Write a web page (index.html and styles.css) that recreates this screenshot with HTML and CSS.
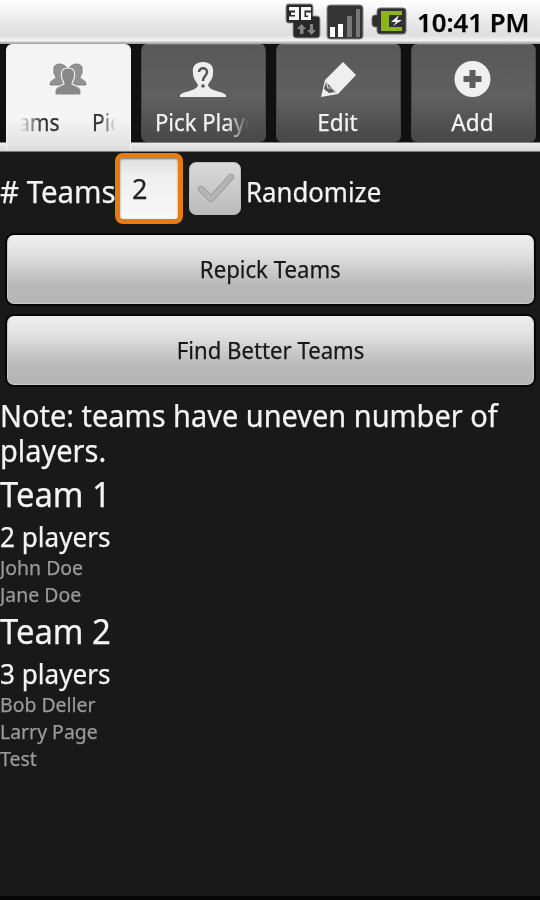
FILE: index.html
```
<!DOCTYPE html>
<html lang="en">
<head>
<meta charset="utf-8">
<title>Team Picker</title>
<link rel="stylesheet" href="styles.css">
</head>
<body>
<header class="status">
  <svg class="i3g" width="38" height="38" viewBox="0 0 38 38">
    <path d="M3 1H26Q28 1 28 4V13H32Q35 13 35 16V32Q35 35 32 35H11Q8 35 8 32V20H3Q1 20 1 17V4Q1 1 3 1Z" fill="#292929" stroke="#999" stroke-width="1"/>
    <path d="M4 4H14V17H4V13.500H10V12H6V9.500H10V7.500H4ZM26 4H16V17H26V9.500H21V12.500H23V14H19.500V7.500H26Z" fill="#f4f4f4"/>
    <path d="M16.500 21L21 26H18.500V31H15V26H12ZM25 21H28V27H31L26.500 32L22 27H25Z" fill="#858585"/>
  </svg>
  <svg class="isig" width="38" height="36" viewBox="0 0 38 36">
    <rect x="1" y="1" width="36" height="34" rx="3" fill="#343434" stroke="#8a8a8a"/>
    <path d="M4 23H9V33H4ZM12 20H17V33H12Z" fill="#fff"/>
    <path d="M21 12H26V33H21ZM30 5H34V33H30Z" fill="#777"/>
  </svg>
  <svg class="ibat" width="36" height="28" viewBox="0 0 36 28">
    <path d="M9 1H32Q35 1 35 4V24Q35 27 32 27H9Q6 27 6 24V20H4Q1 20 1 17V11Q1 8 4 8H6V4Q6 1 9 1Z" fill="#303030" stroke="#777"/>
    <path d="M10 4H31V8H18V20H31V24H10Z" fill="#8cb516"/>
    <path d="M28 8L20 15H25L22 19L31 13H26Z" fill="#f2f2f2"/>
  </svg>
  <span class="clock"><span class="t">10:41 PM</span></span>
</header>
<nav class="tabs">
  <div class="tab active">
    <svg class="icon" width="38" height="34" viewBox="0 0 38 34">
      <g fill="#929292" stroke="#777" stroke-width=".8">
        <path d="M10 1C6 1 4 4 5 8C4 11 7 12 7 15C5 17 1 17 1 22H18V5C16 2 13 1 10 1Z"/>
        <path d="M28 1C32 1 34 4 33 8C34 11 31 12 31 15C33 17 37 17 37 22H20V5C22 2 25 1 28 1Z"/>
      </g>
      <path d="M19 5C13 5 12 9 12.500 13C12 16 15 18 15 21C12 23 6 23 6 28V32H32V28C32 23 26 23 23 21C23 18 26 16 25.500 13C26 9 25 5 19 5Z" fill="#888" stroke="#f1f1f1" stroke-width="1.200"/>
    </svg>
    <div class="label marquee"><span class="t">ams</span><span class="t next">Pic</span></div>
  </div>
  <div class="tab">
    <svg class="icon" width="48" height="36" viewBox="0 0 48 36">
      <path d="M24 0C16 0 13 5 14 11C14 17 17 19 19 23C18 29 5 29 1 33V35H47V33C43 29 30 29 29 23C31 19 34 17 34 11C35 5 32 0 24 0Z" fill="#eee"/>
      <path d="M20 10C20 5 28 5 28 10C28 14 24 14 24 19" fill="none" stroke="#555" stroke-width="2.500"/>
      <circle cx="24" cy="24" r="1.800" fill="#555"/>
    </svg>
    <div class="label faded"><span class="t">Pick Playe</span></div>
  </div>
  <div class="tab">
    <svg class="icon" width="38" height="38" viewBox="0 0 38 38">
      <path d="M24 1L37 14L19 33L2 36L6 19Z" fill="#efefef"/>
      <path d="M7 21L17 31L10 32L5 28Z" fill="#5c5c5c"/>
      <path d="M7 20L9 27L13 27L17 32" fill="none" stroke="#d8d8d8" stroke-width="1.200"/>
    </svg>
    <div class="label"><span class="t">Edit</span></div>
  </div>
  <div class="tab">
    <svg class="icon" width="38" height="38" viewBox="0 0 38 38">
      <circle cx="18.500" cy="18" r="18" fill="#efefef"/>
      <path d="M15.500 9H21.500V15H27.500V21H21.500V27H15.500V21H9.500V15H15.500Z" fill="#5d5d5d"/>
    </svg>
    <div class="label"><span class="t">Add</span></div>
  </div>
</nav>
<main>
  <div class="controls">
    <span class="count"><span class="t"># Teams</span></span>
    <div class="field"><span class="t">2</span></div>
    <div class="check">
      <svg width="38" height="34" viewBox="0 0 38 34"><path d="M4 17L14 27L34 5" fill="none" stroke="#a0a0a0" stroke-width="6.500" stroke-linecap="round" stroke-linejoin="round"/><path d="M4 17L14 27L34 5" fill="none" stroke="#b5b5b5" stroke-width="4.500" stroke-linecap="round" stroke-linejoin="round"/></svg>
    </div>
    <span class="random"><span class="t">Randomize</span></span>
  </div>
  <div class="button"><span class="t">Repick Teams</span></div>
  <div class="button"><span class="t">Find Better Teams</span></div>
  <div class="note"><div><span class="t">Note: teams have uneven number of</span></div><div><span class="t">players.</span></div></div>
  <section>
    <h2><span class="t">Team 1</span></h2>
    <h3><span class="t">2 players</span></h3>
    <p><span class="t">John Doe</span></p>
    <p><span class="t">Jane Doe</span></p>
  </section>
  <section>
    <h2><span class="t">Team 2</span></h2>
    <h3><span class="t">3 players</span></h3>
    <p><span class="t">Bob Deller</span></p>
    <p><span class="t">Larry Page</span></p>
    <p><span class="t">Test</span></p>
  </section>
</main>
</body>
</html>
```
FILE: styles.css
```
* { box-sizing: border-box; margin: 0; padding: 0; }
body {
  width: 540px; height: 900px; overflow: hidden;
  background: #191919; border-bottom: 4px solid #050505;
  font-family: "Noto Sans", "Open Sans", sans-serif; color: #f3f3f3;
}
svg { display: block; flex: none; }
.t { display: inline-block; white-space: nowrap; transform: scaleX(.965); transform-origin: left center; -webkit-text-stroke: .25px currentColor; }
.status {
  height: 44px; display: flex; padding-left: 285px; color: #050505;
  background: linear-gradient(#fff, #efefef 35%, #dedede 80%, #f2f2f2 92%, #999 100%);
}
.i3g { margin-top: 3px; }
.isig { margin: 4px 0 0 3px; }
.ibat { margin: 7px 0 0 7px; }
.clock { margin-left: 10px; font-size: 25px; font-weight: 600; line-height: 45px; }
.clock .t { transform: scaleX(1.03); }
.tabs {
  height: 108px; display: grid; grid-template-columns: repeat(4, 125px); column-gap: 10px;
  padding: 0 0 0 6px; align-items: start;
  background: linear-gradient(#111 0 98px, #ededed 99px, #d5d5d5 107px, #222 108px);
}
.tab {
  height: 98px; display: flex; flex-direction: column; align-items: center; padding: 16px 2px 0 0;
  border-radius: 6px; border: 1px solid #4a4a4a; border-top-color: #777;
  background: linear-gradient(#595959, #606060 55%, #555 75%, #484848);
}
.tab.active { height: 106px; border-color: #f4f4f4; border-bottom: 0; border-radius: 6px 6px 0 0; background: linear-gradient(#f3f3f3, #f5f5f5 70%, #e2e2e2 95%, #ddd); }
.tab .icon { height: 38px; }
.active .icon { height: 34px; margin: 2px 0; }
.label { margin-top: 5px; height: 36px; font-size: 24px; line-height: 36px; }
.label .t { transform: scaleX(.94); transform-origin: center; }
.marquee { color: #333; width: 100px; display: flex; gap: 27px; overflow: hidden; -webkit-mask-image: linear-gradient(90deg, transparent 2%, #000 24%, #000 82%, transparent 98%); }
.faded { width: 96px; overflow: hidden; -webkit-mask-image: linear-gradient(90deg, #000 75%, transparent 98%); }
.faded .t { transform: scaleX(.92); transform-origin: left center; }
.marquee .t { transform: scaleX(.88); transform-origin: left center; }
.controls { height: 79px; display: flex; }
.count { width: 115px; font-size: 30px; line-height: 79px; }
.count .t { transform: scaleX(.98); }
.field {
  width: 68px; height: 71px; margin-top: 1px; padding-left: 12px; border: 5px solid #e87b12; border-radius: 8px;
  background: linear-gradient(#dedede, #efefef 30%, #f7f7f7); color: #222;
  font-size: 28px; line-height: 60px; box-shadow: inset 0 1px 2px #777;
}
.check {
  width: 52px; height: 53px; margin: 10px 0 0 6px; padding: 9px 7px;
  border-radius: 7px; border: 1px solid #bbb; background: linear-gradient(#d9d9d9, #c7c7c7 60%, #bbb);
}
.random { margin-left: 5px; font-size: 26.500px; line-height: 81px; }
.random .t { transform: scaleX(.972); }
.button {
  height: 69px; margin: 4px 6px 12px 7px; text-align: center; color: #181818; font-size: 24px; line-height: 65px;
  border-radius: 7px; border: 1px solid #c9c9c9; border-top-color: #eee;
  background: linear-gradient(#eee, #e0e0e0 28%, #d0d0d0 45%, #b8b8b8 75%, #b5b5b5);
  box-shadow: 0 0 0 2px #050505;
}
.button .t { transform: scaleX(.923); transform-origin: center; }
.note { font-size: 30px; line-height: 35px; height: 74px; padding-top: 1px; }
h2 { font-size: 34px; line-height: 46px; height: 47px; font-weight: 400; }
h3 { font-size: 27px; line-height: 37px; height: 36px; font-weight: 400; }
h3 .t { transform: scaleX(.967); }
p { font-size: 20px; line-height: 27px; color: #9a9a9a; }
p .t { transform: scaleX(.972); }
```
